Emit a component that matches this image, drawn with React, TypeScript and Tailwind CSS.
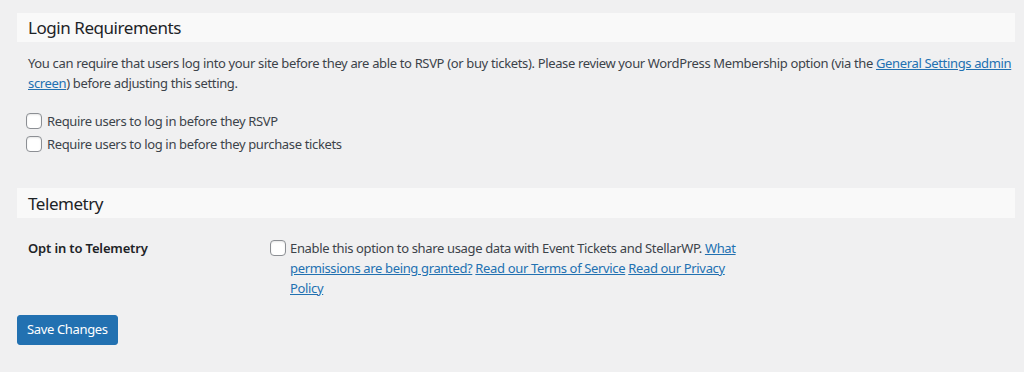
import React from "react";

const font = { fontFamily: '"Segoe UI", "Noto Sans", "Open Sans", sans-serif' };

function Box() {
  return (
    <span className="block w-4 h-4 shrink-0 rounded-[4px] border border-[#8c8f94] bg-white shadow-[inset_0_1px_2px_rgba(0,0,0,0.1)]" />
  );
}

function Link({ children }: { children: React.ReactNode }) {
  return <a className="text-[#2271b1] underline" href="#">{children}</a>;
}

export default function App() {
  return (
    <div className="w-[1024px] h-[372px] bg-[#f0f0f1] text-[#3c434a] text-[13px] tracking-[-0.35px] pt-[13px] pl-[17px] pr-[9px]" style={font}>
      <div className="h-[29px] bg-[#f9f9f9] flex items-center pl-[11px]">
        <h3 className="text-[17px] tracking-[-0.45px] font-normal text-[#1d2327] leading-none">Login Requirements</h3>
      </div>
      <p className="mt-[11px] pl-[11px] leading-[20px]">
        You can require that users log into your site before they are able to RSVP (or buy tickets). Please review your WordPress Membership option (via the <Link>General Settings admin screen</Link>) before adjusting this setting.
      </p>
      <div className="mt-[20px] pl-[9px] flex flex-col gap-[7px]">
        <label className="flex items-center gap-[5px] leading-[16px]"><Box />Require users to log in before they RSVP</label>
        <label className="flex items-center gap-[5px] leading-[16px]"><Box />Require users to log in before they purchase tickets</label>
      </div>
      <div className="mt-[36px] h-[30px] bg-[#f9f9f9] flex items-center pl-[11px]">
        <h3 className="text-[17px] tracking-[-0.45px] font-normal text-[#1d2327] leading-none">Telemetry</h3>
      </div>
      <div className="mt-[20px] flex">
        <div className="w-[253px] pl-[11px] font-semibold tracking-[-0.15px] text-[#1d2327] leading-[20px]">Opt in to Telemetry</div>
        <div className="flex items-start gap-[4px] w-[470px]">
          <div className="pt-[2px]"><Box /></div>
          <div className="leading-[20px]">
            Enable this option to share usage data with Event Tickets and StellarWP. <Link>What permissions are being granted?</Link> <Link>Read our Terms of Service</Link> <Link>Read our Privacy Policy</Link>
          </div>
        </div>
      </div>
      <button className="mt-[17px] h-[30px] px-[9px] bg-[#2271b1] text-white rounded-[3px] border border-[#2271b1] text-[13px]">Save Changes</button>
    </div>
  );
}
